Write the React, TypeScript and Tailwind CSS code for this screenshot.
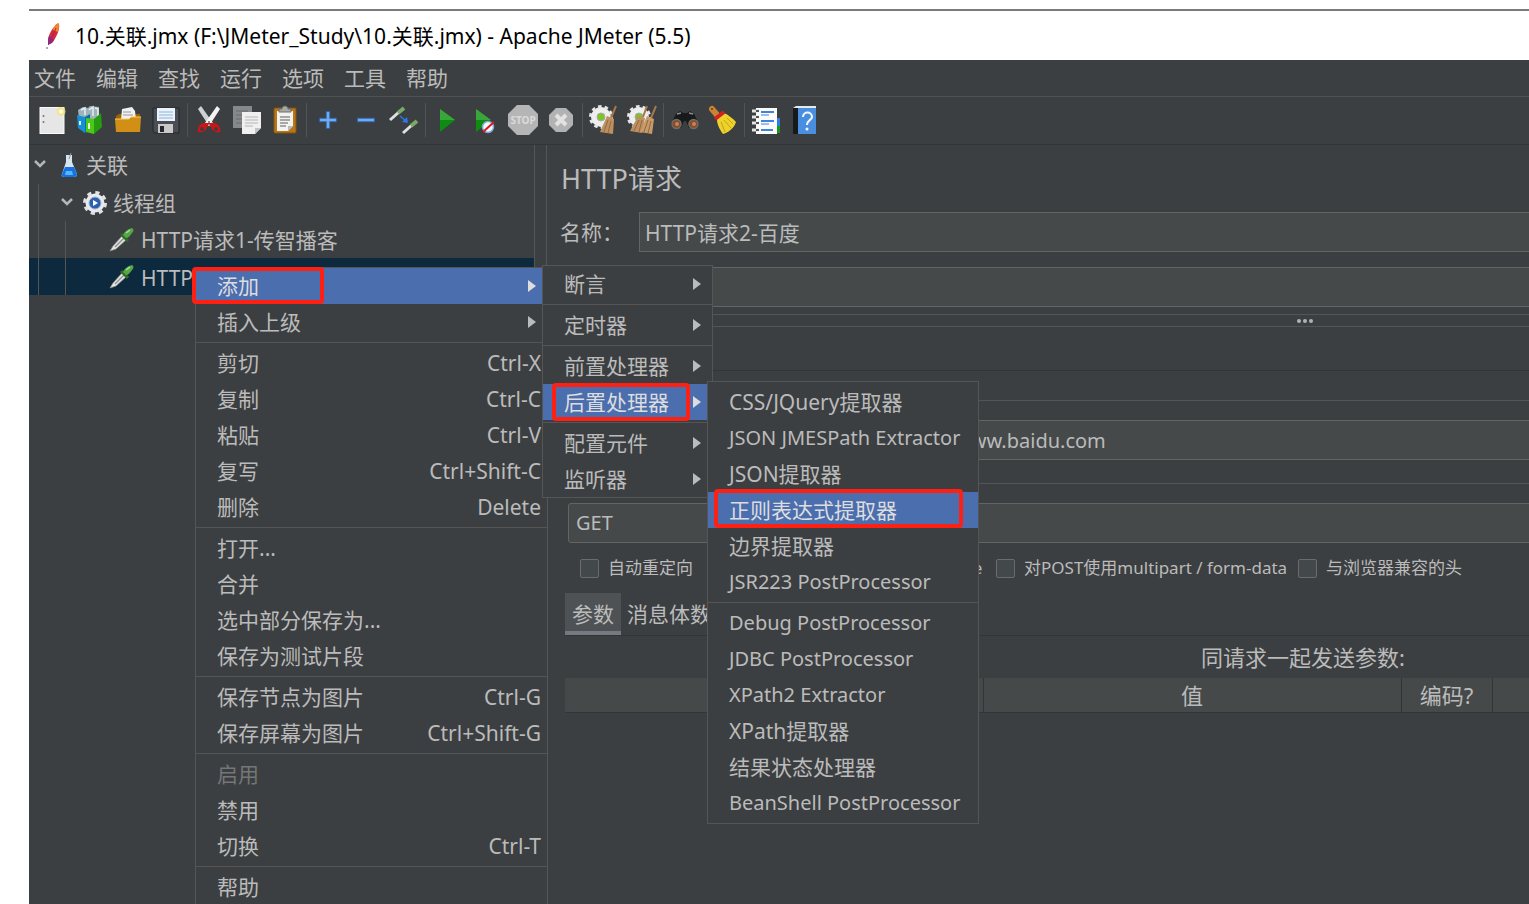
import { useState } from 'react';
import type { ReactNode } from 'react';

interface MenuEntry {
  label: string;
  shortcut?: string;
  arrow?: boolean;
  disabled?: boolean;
  // position of the red marker, entries with one are also highlighted
  marker?: string;
  submenu?: ReactNode;
}

type MenuGroup = MenuEntry[];

/* ---------- toolbar icons ---------- */

function Icon({ children }: { children: ReactNode }) {
  return (
    <svg viewBox="0 0 30 30" className="w-[30px] h-[30px]" aria-hidden="true">
      {children}
    </svg>
  );
}

const NewIcon = () => (
  <Icon>
    <rect x="3" y="2.500" width="24" height="26" fill="#e6e6e6" stroke="#fafafa" />
    <circle cx="6.500" cy="11" r="1" fill="#777" />
    <circle cx="6.500" cy="17" r="1" fill="#777" />
    <circle cx="24" cy="6.500" r="4.500" fill="#f5e67a" opacity=".8" />
    <circle cx="24" cy="6.500" r="2" fill="#fffef0" />
  </Icon>
);

const TemplatesIcon = () => (
  <Icon>
    <path d="M3 5l5-3 5 1 2-2 9 1v10l-8 4-12-3z" fill="#9fb4ba" />
    <path d="M6 5l4-2v7M14 5l4-3v9M20 3l3 1v7" stroke="#e6eff1" strokeWidth="1.500" fill="none" />
    <path d="M2 10l8 2v16l-7-5z" fill="#1590d4" />
    <path d="M10 12l5-3v17l-5 2z" fill="#0b6fae" />
    <path d="M5 16v4" stroke="#d7f1ff" strokeWidth="2" />
    <path d="M11 13l8 1v15l-8-2z" fill="#4cc81a" />
    <path d="M19 14l7-6 1 14-8 7z" fill="#259b10" />
    <path d="M14 18v6" stroke="#e2ffd2" strokeWidth="2" />
  </Icon>
);

const OpenIcon = () => (
  <Icon>
    <path d="M3 11l3-2h21v18H4z" fill="#9c6500" />
    <path d="M9 4l10-2 3 4 1 9H8z" fill="#f1f1f1" />
    <path d="M10 7h8M10 10h10" stroke="#999" strokeWidth="1" />
    <path d="M2 14h14l2-2h10l-1 15H3z" fill="#d18f16" />
    <path d="M2 14h14l2-2h10" stroke="#f7cb66" fill="none" />
  </Icon>
);

const SaveIcon = () => (
  <Icon>
    <path d="M2 3h26v25H4l-2-2z" fill="#4a4d54" stroke="#22252a" />
    <rect x="6" y="3" width="18" height="13" fill="#eaf3fb" />
    <path d="M8 7h14M8 10h14M8 13h14" stroke="#8db1d6" />
    <rect x="7" y="19" width="15" height="9" fill="#c9c9c9" />
    <rect x="9" y="21" width="4" height="6" fill="#26282d" />
  </Icon>
);

const CutIcon = () => (
  <Icon>
    <path d="M4 4l3-3 12 17-4 3z" fill="#cfd2d2" />
    <path d="M26 4l-3-3-12 17 4 3z" fill="#f3f4f4" />
    <circle cx="15" cy="17" r="1" fill="#666" />
    <path d="M14 18l-4 0c-5 1-7 5-6 9 4 1 8-1 9-5l2-3 2 3c1 4 5 6 9 5 1-4-1-8-6-9z" fill="#d01414" />
    <ellipse cx="8" cy="24" rx="2" ry="2" fill="#3c3f41" />
    <ellipse cx="22" cy="24" rx="2" ry="2" fill="#3c3f41" />
  </Icon>
);

const CopyIcon = () => (
  <Icon>
    <path d="M1 1h19v22H1z" fill="#85898b" />
    <path d="M4 6h12M4 10h6M4 14h6M4 18h6" stroke="#6a6d6f" />
    <path d="M10 7h19v16l-6 6H10z" fill="#f0f0f0" />
    <path d="M13 12h13M13 15h13M13 18h13M13 21h8" stroke="#b4b4b4" />
    <path d="M29 23h-6v6z" fill="#c2c2c2" />
  </Icon>
);

const PasteIcon = () => (
  <Icon>
    <rect x="4" y="3" width="22" height="25" rx="1" fill="#b8761b" stroke="#84530f" />
    <path d="M7 6h16v15l-5 5H7z" fill="#f2f2f0" />
    <path d="M10 12h10M10 15h10M10 18h8M10 21h6" stroke="#8f8f8f" strokeWidth="1.500" />
    <path d="M18 26v-5h5z" fill="#b9b9b9" />
    <path d="M9 7V4h3c0-4 6-4 6 0h3v3z" fill="#a7aaa4" stroke="#6c6e6a" />
  </Icon>
);

const PlusIcon = () => (
  <Icon>
    <path d="M15 6v18M6 15h18" stroke="#2a62ad" strokeWidth="4.500" />
    <path d="M15 7v16M7 15h16" stroke="#74aaec" strokeWidth="2.500" />
  </Icon>
);

const MinusIcon = () => (
  <Icon>
    <path d="M6 15h18" stroke="#2a62ad" strokeWidth="4.500" />
    <path d="M7 15h16" stroke="#74aaec" strokeWidth="2.500" />
  </Icon>
);

const ToggleIcon = () => (
  <Icon>
    <path d="M1 15l9-8" stroke="#dfe2df" strokeWidth="3" />
    <path d="M9 8l6-5" stroke="#79a868" strokeWidth="4" />
    <path d="M14 28l9-8" stroke="#dfe2df" strokeWidth="3" />
    <path d="M22 21l6-5" stroke="#79a868" strokeWidth="4" />
    <path d="M11 11l6 5" stroke="#2a7be8" strokeWidth="1.500" />
    <path d="M19 18l-6-1 5-5z" fill="#2a7be8" />
  </Icon>
);

const PlayIcon = () => (
  <Icon>
    <path d="M8 4l15 11L8 27z" fill="#0d8c12" />
    <path d="M8 4l15 11H8z" fill="#3aa53a" />
  </Icon>
);

const PlayNoTimersIcon = () => (
  <Icon>
    <path d="M6 4l15 11L6 27z" fill="#0d8c12" />
    <path d="M6 4l15 11H6z" fill="#3aa53a" />
    <circle cx="18" cy="22" r="5.500" fill="#f4f8fc" stroke="#7da7d6" strokeWidth="1.500" />
    <path d="M13 27l11-10" stroke="#d81c1c" strokeWidth="2" />
  </Icon>
);

const StopIcon = () => (
  <Icon>
    <path d="M9 0h12l9 9v12l-9 9H9l-9-9V9z" fill="#b5b5b5" />
    <text x="15" y="19" textAnchor="middle" fontSize="10" fontWeight="700" fill="#dadada">
      STOP
    </text>
  </Icon>
);

const ShutdownIcon = () => (
  <Icon>
    <path d="M10 3h10l7 7v10l-7 7H10l-7-7V10z" fill="#b2b2b2" />
    <path d="M10 10l10 10M20 10L10 20" stroke="#e2e2e2" strokeWidth="4" />
  </Icon>
);

const Cog = () => (
  <>
    <circle cx="12" cy="12" r="10" fill="#eeeeee" />
    <circle cx="12" cy="12" r="10.500" fill="none" stroke="#e6e6e6" strokeWidth="3" strokeDasharray="3.500 3.100" />
    <circle cx="12" cy="12" r="4" fill="#7cc428" stroke="#a9a9a9" />
  </>
);

const ClearIcon = () => (
  <Icon>
    <Cog />
    <path d="M27 1l-5 12" stroke="#a5774a" strokeWidth="2" />
    <path d="M18 11l7 3-1 15-13-2z" fill="#bd9061" />
    <path d="M19 15l-4 12M22 16l-3 12" stroke="#93683e" />
  </Icon>
);

const ClearAllIcon = () => (
  <Icon>
    <Cog />
    <path d="M20 1l-4 11M29 1l-5 12" stroke="#a5774a" strokeWidth="2" />
    <path d="M11 11l7 2-3 15-12-2z" fill="#bd9061" />
    <path d="M20 11l7 3-2 15-12-2z" fill="#c79a6a" />
    <path d="M12 15l-5 11M15 15l-3 12M21 15l-4 12M24 16l-3 12" stroke="#93683e" />
  </Icon>
);

const SearchIcon = () => (
  <Icon>
    <path d="M6 9l4-3 3 2h4l3-2 4 3 5 10-3 4h-7l-3-7h-2l-3 7H4l-3-4z" fill="#17191b" />
    <path d="M7 9l4-1M19 8l4 1" stroke="#8d9194" strokeWidth="1.500" />
    <circle cx="6.500" cy="19" r="4.500" fill="#8a4b25" stroke="#6b6e71" strokeWidth="1.500" />
    <circle cx="23.500" cy="19" r="4.500" fill="#8a4b25" stroke="#6b6e71" strokeWidth="1.500" />
    <circle cx="7" cy="19" r="2" fill="#cb8252" />
    <circle cx="24" cy="19" r="2" fill="#cb8252" />
  </Icon>
);

const ResetSearchIcon = () => (
  <Icon>
    <path d="M4 4l6 7" stroke="#c88335" strokeWidth="6" strokeLinecap="round" />
    <circle cx="4" cy="4" r="1" fill="#6b3c10" />
    <path d="M9 14l7-6c5 2 9 6 12 9-2 6-7 10-13 12-3-4-6-9-6-15z" fill="#ecd22b" />
    <path d="M13 17l4 10M16 15l7 8M19 13l6 6" stroke="#c2a50c" />
    <path d="M7 14l9-7" stroke="#cf2222" strokeWidth="4" />
  </Icon>
);

const FunctionHelperIcon = () => (
  <Icon>
    <rect x="24" y="13" width="5" height="8" fill="#2e7de0" />
    <rect x="24" y="21" width="5" height="7" fill="#189a18" />
    <rect x="5" y="3" width="21" height="26" fill="#fbfbfb" />
    <path d="M10 7h13M10 16h13M10 25h12" stroke="#3f82e0" strokeWidth="2" />
    <path d="M10 10h8M10 19h8" stroke="#3f82e0" strokeWidth="1" />
    <path d="M1 6h7M1 12h7M1 18h7M1 25h7" stroke="#e4e4e4" strokeWidth="3" />
    <path d="M5 6h3M5 12h3M5 18h3M5 25h3" stroke="#222" strokeWidth="1.500" />
  </Icon>
);

const HelpIcon = () => (
  <Icon>
    <path d="M4 3l3-2h20v2z" fill="#e4eaf1" />
    <rect x="4" y="3" width="5" height="26" fill="#17191b" />
    <rect x="9" y="3" width="18" height="26" fill="#4a8ee0" />
    <path d="M14 12c0-6 9-6 9 0 0 3-5 3-5 8" fill="none" stroke="#f3f8ff" strokeWidth="2" />
    <circle cx="18" cy="24" r="1.500" fill="#f3f8ff" />
  </Icon>
);

const toolbar = [
  [
    { name: '新建', icon: <NewIcon /> },
    { name: '模板', icon: <TemplatesIcon /> },
    { name: '打开', icon: <OpenIcon /> },
    { name: '保存', icon: <SaveIcon /> },
  ],
  [
    { name: '剪切', icon: <CutIcon /> },
    { name: '复制', icon: <CopyIcon /> },
    { name: '粘贴', icon: <PasteIcon /> },
  ],
  [
    { name: '展开', icon: <PlusIcon /> },
    { name: '折叠', icon: <MinusIcon /> },
    { name: '切换', icon: <ToggleIcon /> },
  ],
  [
    { name: '启动', icon: <PlayIcon /> },
    { name: '不停顿启动', icon: <PlayNoTimersIcon /> },
    { name: '停止', icon: <StopIcon /> },
    { name: '关闭', icon: <ShutdownIcon /> },
  ],
  [
    { name: '清除', icon: <ClearIcon /> },
    { name: '清除全部', icon: <ClearAllIcon /> },
  ],
  [
    { name: '搜索', icon: <SearchIcon /> },
    { name: '重置搜索', icon: <ResetSearchIcon /> },
  ],
  [
    { name: '函数助手', icon: <FunctionHelperIcon /> },
    { name: '帮助', icon: <HelpIcon /> },
  ],
];

/* ---------- tree icons ---------- */

const FeatherIcon = () => (
  <svg viewBox="0 0 16 28" className="w-4 h-7" aria-hidden="true">
    <path d="M10 4c1-2 3-3 4-2 1 5-2 12-6 18l-5 3v-3c0-6 3-12 7-16z" fill="#d42a3e" />
    <path d="M10 4c1-2 3-3 4-2 0 3 0 5-1 8l-5-2c0-1 1-3 2-4z" fill="#f0872a" />
    <path d="M3 21c0-3 0-5 1-7l5 3-2 4-4 2z" fill="#8d2a86" />
    <path d="M11 6L5 20" stroke="#b3213f" strokeWidth="1" />
    <circle cx="2" cy="26" r="1" fill="#9a8aa0" />
  </svg>
);

const Chevron = () => (
  <svg viewBox="0 0 14 14" className="w-[14px] h-[14px] shrink-0" aria-hidden="true">
    <path d="M2 3l5 5 5-5" fill="none" stroke="#b4b6b8" strokeWidth="2.500" />
  </svg>
);

const FlaskIcon = () => (
  <svg viewBox="0 0 20 26" className="w-5 h-[26px] shrink-0" aria-hidden="true">
    <path d="M7 3h6v7l5 12c0 2-1 3-3 3H5c-2 0-3-1-2-3l4-12z" fill="#d5e4f0" />
    <path d="M6 15h9l3 7c0 2-1 3-3 3H5c-2 0-3-1-2-3z" fill="#1473e0" />
    <path d="M7 19h6l1 4H6z" fill="#58b4ff" />
    <path d="M10 7l2-6" stroke="#8e9498" strokeWidth="1" />
  </svg>
);

const GearIcon = () => (
  <svg viewBox="0 0 26 26" className="w-[26px] h-[26px] shrink-0" aria-hidden="true">
    <circle cx="13" cy="13" r="9.500" fill="#e9ebed" />
    <circle cx="13" cy="13" r="10.500" fill="none" stroke="#e0e2e4" strokeWidth="3" strokeDasharray="4.200 4.047" />
    <circle cx="13" cy="13" r="6" fill="#2d5fae" stroke="#9cb2d2" />
    <path d="M11 10l5 3-5 3z" fill="#fff" />
  </svg>
);

const PipetteIcon = () => (
  <svg viewBox="0 0 26 26" className="w-[26px] h-[26px] shrink-0" aria-hidden="true">
    <path d="M1 24l3-5L14 8l4 4L7 22z" fill="#e6e8e6" stroke="#8a8d8a" strokeWidth=".8" />
    <path d="M6 20L15 11" stroke="#8a908d" strokeWidth="1.500" />
    <path d="M12 7l7 7" stroke="#2f6b25" strokeWidth="3" />
    <path d="M14 8c1-3 5-6 9-7 2 1 2 3 0 5-2 3-4 5-6 5z" fill="#56a546" />
    <path d="M17 6l4-3" stroke="#a9dc99" strokeWidth="1.500" />
  </svg>
);

/* ---------- context menus ---------- */

function Menu({ groups, className }: { groups: MenuGroup[]; className: string }) {
  return (
    <div role="menu" className={`absolute bg-[#3c3f41] border border-[#555555] ${className}`}>
      {groups.map((group, g) => (
        <div key={g} role="group">
          {g > 0 && <div role="separator" className="h-px my-0.5 bg-[#555555]" />}
          {group.map(entry => (
            <div key={entry.label} className={`relative h-9 ${entry.marker ? 'bg-[#4b6eaf]' : ''}`}>
              <button
                type="button"
                role="menuitem"
                disabled={entry.disabled}
                className={`w-full h-full flex items-center justify-between pl-[21px] whitespace-nowrap text-left ${
                  entry.arrow ? 'pr-[11px]' : 'pr-[6px]'
                } ${entry.disabled ? 'text-[#747677]' : entry.marker ? 'text-[#dddddd]' : 'text-[#bbbbbb]'}`}
              >
                {/* latin-only names run wider than the CJK ones */}
                <span className={/^[\w ]+$/.test(entry.label) ? 'text-[20px]' : ''}>{entry.label}</span>
                {entry.shortcut && <span>{entry.shortcut}</span>}
                {entry.arrow && (
                  <svg viewBox="0 0 8 12" className="w-2 h-3" aria-hidden="true">
                    <path d="M0 0l8 6-8 6z" fill="currentColor" />
                  </svg>
                )}
              </button>
              {entry.marker && (
                <span className={`absolute border-4 border-[#ff2014] rounded-[4px] pointer-events-none ${entry.marker}`} />
              )}
              {entry.submenu}
            </div>
          ))}
        </div>
      ))}
    </div>
  );
}

const postProcessors: MenuGroup[] = [
  [
    { label: 'CSS/JQuery提取器' },
    { label: 'JSON JMESPath Extractor' },
    { label: 'JSON提取器' },
    { label: '正则表达式提取器', marker: '-top-[3px] bottom-0 left-[6px] right-[15px]' },
    { label: '边界提取器' },
    { label: 'JSR223 PostProcessor' },
  ],
  [
    { label: 'Debug PostProcessor' },
    { label: 'JDBC PostProcessor' },
    { label: 'XPath2 Extractor' },
    { label: 'XPath提取器' },
    { label: '结果状态处理器' },
    { label: 'BeanShell PostProcessor' },
  ],
];

const addMenu: MenuGroup[] = [
  [{ label: '断言', arrow: true }],
  [{ label: '定时器', arrow: true }],
  [
    { label: '前置处理器', arrow: true },
    {
      label: '后置处理器',
      arrow: true,
      marker: '-inset-y-px left-[9px] right-[22px]',
      submenu: <Menu groups={postProcessors} className="left-full -ml-[5px] -top-[3px] w-[272px] py-0.5" />,
    },
  ],
  [
    { label: '配置元件', arrow: true },
    { label: '监听器', arrow: true },
  ],
];

const contextMenu: MenuGroup[] = [
  [
    {
      label: '添加',
      arrow: true,
      marker: '-top-px bottom-0 -left-1 w-[132px]',
      submenu: <Menu groups={addMenu} className="left-full -ml-[5px] -top-[3px] w-[171px]" />,
    },
    { label: '插入上级', arrow: true },
  ],
  [
    { label: '剪切', shortcut: 'Ctrl-X' },
    { label: '复制', shortcut: 'Ctrl-C' },
    { label: '粘贴', shortcut: 'Ctrl-V' },
    { label: '复写', shortcut: 'Ctrl+Shift-C' },
    { label: '删除', shortcut: 'Delete' },
  ],
  [{ label: '打开...' }, { label: '合并' }, { label: '选中部分保存为...' }, { label: '保存为测试片段' }],
  [
    { label: '保存节点为图片', shortcut: 'Ctrl-G' },
    { label: '保存屏幕为图片', shortcut: 'Ctrl+Shift-G' },
  ],
  [{ label: '启用', disabled: true }, { label: '禁用' }, { label: '切换', shortcut: 'Ctrl-T' }],
  [{ label: '帮助' }],
];

/* ---------- panels ---------- */

function TestPlanTree() {
  return (
    <aside className="w-[506px] shrink-0 pt-0.5 border-r border-[#555555]">
      <ul>
        <li>
          <div className="h-[37px] flex items-center pl-1 pb-0.5">
            <Chevron />
            <span className="ml-3"><FlaskIcon /></span>
            <span className="ml-[7px]">关联</span>
          </div>
          <ul>
            <li>
              <div className="h-[37px] flex items-center">
                <span className="w-[10px] h-full border-r border-[#555555]" />
                <span className="ml-[21px]"><Chevron /></span>
                <span className="ml-2"><GearIcon /></span>
                <span className="ml-[5px]">线程组</span>
              </div>
              <ul>
                <li className="h-[37px] flex items-center">
                  <span className="w-[10px] h-full border-r border-[#555555]" />
                  <span className="w-[27px] h-full border-r border-[#555555]" />
                  <span className="ml-[43px]"><PipetteIcon /></span>
                  <span className="ml-[6px]">HTTP请求1-传智播客</span>
                </li>
                <li className="relative h-[37px] flex items-center bg-[#0d293e]">
                  <span className="w-[10px] h-full border-r border-[#555555]" />
                  <span className="w-[27px] h-full border-r border-[#555555]" />
                  <span className="ml-[43px]"><PipetteIcon /></span>
                  <span className="ml-[6px] pt-0.5">HTTP请求2-百度</span>
                  <Menu groups={contextMenu} className="z-10 left-[166px] top-[9px] w-[353px]" />
                </li>
              </ul>
            </li>
          </ul>
        </li>
      </ul>
    </aside>
  );
}

function Option({ label, className = '' }: { label: string; className?: string }) {
  const [checked, setChecked] = useState(false);
  return (
    <label className={`flex items-center gap-[9px] text-[17px] whitespace-nowrap ${className}`}>
      <input
        type="checkbox"
        checked={checked}
        onChange={e => setChecked(e.target.checked)}
        className="appearance-none shrink-0 w-[19px] h-[19px] border border-[#6b6b6b] rounded-[2px] bg-[#43494a] checked:bg-[#4b6eaf]"
      />
      {label}
    </label>
  );
}

const fieldClass = 'h-10 flex-1 min-w-0 px-[5px] bg-[#45494a] border border-[#646464] outline-none';

function RequestPanel() {
  return (
    <main className="flex-1 min-w-0 ml-[11px] overflow-hidden border-l border-[#555555]">
      <div className="min-w-[1516px]">
        <h1 className="h-[67px] flex items-center pl-[14px] text-[27px]">HTTP请求</h1>
        <div className="flex items-center pl-[13px] pr-2">
          <label htmlFor="name" className="w-[79px]">名称：</label>
          <input id="name" defaultValue="HTTP请求2-百度" className={fieldClass} />
        </div>
        <div className="flex items-center pl-[92px] pr-2 mt-[15px]">
          <input aria-label="注释" className={fieldClass} />
        </div>

        <div className="mt-[7px] mx-[7px] h-[13px] flex items-center justify-center gap-[2px] border-y border-[#555555]">
          <span className="w-1 h-1 rounded-full bg-[#afb1b3]" />
          <span className="w-1 h-1 rounded-full bg-[#afb1b3]" />
          <span className="w-1 h-1 rounded-full bg-[#afb1b3]" />
        </div>
        <div className="h-11 border-b border-[#323537]" />

        <section aria-label="Web服务器" className="mt-[29px] mx-[13px] border-t border-[#555555] pt-[19px]">
          <div className="flex items-center pl-[389px]">
            <input aria-label="服务器名称或IP" defaultValue="www.baidu.com" className={`${fieldClass} text-[20px]`} />
          </div>
        </section>

        <section className="mt-[23px] mx-[13px] border-t border-[#555555] pt-[19px]">
          <div className="flex items-center gap-[70px] pl-2">
            <select aria-label="方法" className="appearance-none w-[170px] h-10 px-[7px] text-[20px] bg-[#45494a] border border-[#646464] rounded-[3px]">
              <option>GET</option>
              <option>POST</option>
            </select>
            <input aria-label="路径" className={fieldClass} />
          </div>
          <div className="flex items-center h-[50px] pl-[20px]">
            <Option label="自动重定向" className="w-[258px]" />
            <Option label="使用 KeepAlive" className="w-[158px]" />
            <Option label="对POST使用multipart / form-data" className="w-[302px]" />
            <Option label="与浏览器兼容的头" />
          </div>

          <div role="tablist" className="ml-[5px] h-[43px] flex border-b border-[#323537]">
            <button type="button" role="tab" aria-selected="true" className="w-[56px] pt-1 bg-[#4e5254] border-b-4 border-[#747a80]">
              参数
            </button>
            <button type="button" role="tab" aria-selected="false" className="px-[6px]">
              消息体数据
            </button>
          </div>
          <table className="ml-[5px] w-[1476px] table-fixed border-collapse text-[22px]">
            <caption className="h-[42px] leading-[42px]">同请求一起发送参数:</caption>
            <colgroup>
              <col className="w-[418px]" />
              <col className="w-[418px]" />
              <col className="w-[91px]" />
              <col />
            </colgroup>
            <thead>
              <tr className="h-[34px] bg-[#45494a] border-b border-[#323537]">
                <th aria-label="名称" className="border-r border-[#323537]" />
                <th className="font-normal border-r border-[#323537]">值</th>
                <th className="font-normal border-r border-[#323537]">编码?</th>
                <th />
              </tr>
            </thead>
            <tbody />
          </table>
        </section>
      </div>
    </main>
  );
}

const menus = ['文件', '编辑', '查找', '运行', '选项', '工具', '帮助'];

export default function App() {
  return (
    <div className="h-screen overflow-hidden flex flex-col pl-[29px] pt-[9px] bg-white font-['Noto_Sans','Noto_Sans_CJK_SC',sans-serif] text-[21px] leading-7 text-[#bbbbbb]">
      <header className="h-[51px] shrink-0 flex items-center gap-[14px] pl-4 border-t-2 border-[#7b7b7b] text-black">
        <FeatherIcon />
        <span className="whitespace-nowrap">10.关联.jmx (F:\JMeter_Study\10.关联.jmx) - Apache JMeter (5.5)</span>
      </header>

      <div className="flex-1 min-h-0 flex flex-col bg-[#3c3f41]">
        <nav className="h-[37px] shrink-0 flex items-center gap-5 pl-[5px] border-b border-[#515151]">
          {menus.map(m => (
            <button key={m} type="button">{m}</button>
          ))}
        </nav>

        <div role="toolbar" className="h-12 shrink-0 flex items-center pl-1 pb-px border-b border-[#323537]">
          {toolbar.map((group, g) => (
            <div key={g} className="flex items-center">
              {g > 0 && <span className="w-px h-[34px] mx-0.5 bg-[#515355]" />}
              {group.map(b => (
                <button key={b.name} type="button" aria-label={b.name} className="w-[38px] flex justify-center">
                  {b.icon}
                </button>
              ))}
            </div>
          ))}
        </div>

        <div className="flex-1 min-h-0 flex">
          <TestPlanTree />
          <RequestPanel />
        </div>
      </div>
    </div>
  );
}
